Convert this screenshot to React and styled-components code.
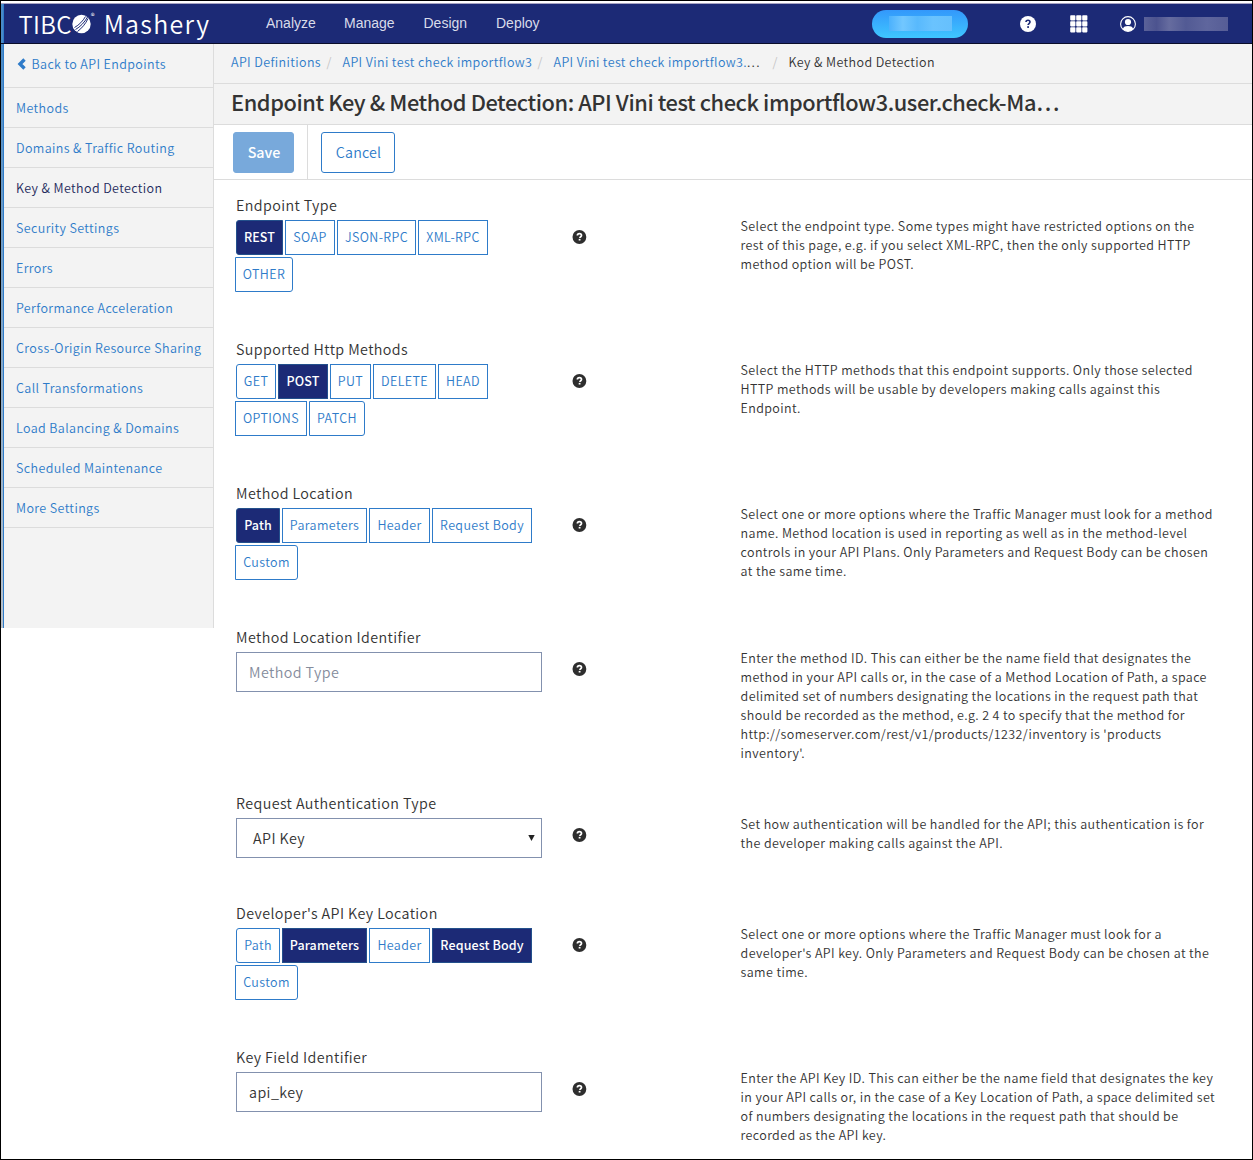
import React from "react";
import styled, { createGlobalStyle, css } from "styled-components";

const sans = '"Noto Sans CJK SC", "Noto Sans", sans-serif';
const navy = "#1c2a76";
const link = "#2e7bc9";
const rule = "#dcdcdc";

const Global = createGlobalStyle`
  * { box-sizing: border-box; }
  body { margin: 0; background: #fff; font-family: ${sans}; font-weight: 350; color: #333; }
  button, input { font-family: inherit; }
`;

const Frame = styled.div`
  width: 1253px;
  height: 1160px;
  overflow: hidden;
  border: 1px solid #000;
  background: #fff;
  display: flex;
  flex-direction: column;
`;

const TopBar = styled.header`
  flex: none;
  height: 41px;
  margin-top: 2px;
  border-top: 1px solid #a9a5c4;
  border-bottom: 1px solid #0a0d2a;
  background: ${navy};
  display: flex;
  align-items: center;
`;

const Edge = styled.div`
  flex: none;
  align-self: stretch;
  width: 3px;
  border-right: 1px solid ${link};
  background: linear-gradient(${(p) => p.$from}, ${(p) => p.$to});
`;

const Logo = styled.div`
  width: 248px;
  height: 39px;
  padding-left: 14.5px;
  display: flex;
  align-items: center;
  color: #fff;
  svg { display: block; }
`;

const LogoText = styled.span`
  font: 350 ${(p) => p.$size}px/37px ${sans};
  letter-spacing: ${(p) => p.$ls}px;
  margin-left: ${(p) => p.$ml ?? 0}px;
`;

const Reg = styled.span`
  width: 8px;
  font: 8px/10px ${sans};
  align-self: flex-start;
  margin-top: 7px;
`;

const NavLink = styled.a`
  width: ${(p) => p.$w}px;
  padding: 0 0 2px 14px;
  font: 14px/20px "Liberation Sans", Arial, sans-serif;
  color: #d9dcea;
`;

const Spacer = styled.div`
  flex: 1;
`;

const Pill = styled.div`
  width: 96px;
  height: 28px;
  border-radius: 14px;
  margin-right: 52px;
  background: linear-gradient(#3398fb, #3fc6ff);
  display: flex;
  align-items: center;
  justify-content: center;
`;

const Redacted = styled.div`
  width: ${(p) => p.$w}px;
  height: ${(p) => p.$h}px;
  margin-right: ${(p) => p.$gap ?? 0}px;
  background: ${(p) => p.$fill};
`;

const TopIcon = styled.div`
  display: flex;
  margin-right: ${(p) => p.$gap}px;
`;

const Body = styled.div`
  flex: 1;
  display: flex;
  align-items: flex-start;
`;

const Sidebar = styled.aside`
  flex: none;
  width: 213px;
  height: 584px;
  border-right: 1px solid ${rule};
  background: #f3f3f3;
  display: flex;
`;

const SideNav = styled.nav`
  flex: 1;
  min-width: 0;
`;

const Back = styled.a`
  height: 44px;
  padding: 0 0 4px 13px;
  border-bottom: 1px solid ${rule};
  display: flex;
  align-items: center;
  gap: 5.5px;
  font-size: 12.5px;
  letter-spacing: 0.38px;
  white-space: nowrap;
  color: ${link};
`;

const SideItem = styled.a`
  display: block;
  height: 40px;
  padding-left: 12px;
  border-bottom: 1px solid ${rule};
  font-size: 12.5px;
  line-height: 40px;
  letter-spacing: 0.385px;
  white-space: nowrap;
  color: ${(p) => (p.$active ? "#1d2a5c" : link)};
`;

const Main = styled.main`
  flex: 1;
  min-width: 0;
`;

const Crumbs = styled.div`
  height: 40px;
  padding: 0 0 4px 17px;
  border-bottom: 1px solid ${rule};
  background: #f3f3f3;
  display: flex;
  align-items: center;
  font-size: 12.5px;
  letter-spacing: 0.385px;
  white-space: nowrap;
`;

const Crumb = styled.span`
  width: ${(p) => p.$w}px;
  color: ${(p) => (p.$here ? "#333" : link)};
`;

const Slash = styled.span`
  width: ${(p) => p.$w}px;
  color: #c4c4c4;
`;

const Dots = styled.span`
  color: #333;
  letter-spacing: 1.2px;
`;

const Title = styled.h1`
  margin: 0;
  height: 41px;
  padding-left: 17px;
  border-bottom: 1px solid ${rule};
  background: #f3f3f3;
  font-size: 21.8px;
  font-weight: 500;
  line-height: 36px;
  letter-spacing: -0.425px;
  white-space: nowrap;
`;

const Toolbar = styled.div`
  height: 55px;
  padding-left: 19px;
  border-bottom: 1px solid ${rule};
  display: flex;
`;

const SaveCell = styled.div`
  width: 75px;
  padding-top: 7px;
  border-right: 1px solid ${rule};
`;

const CancelCell = styled.div`
  padding: 7px 0 0 13px;
`;

const Button = styled.button`
  width: ${(p) => p.$w}px;
  height: 41px;
  padding: 0 0 2px 1px;
  border-radius: 3px;
  border: 1px solid ${(p) => (p.$primary ? "#78a9db" : link)};
  background: ${(p) => (p.$primary ? "#78a9db" : "#fff")};
  color: ${(p) => (p.$primary ? "#fff" : link)};
  font-size: 14.3px;
  font-weight: ${(p) => (p.$primary ? 500 : 350)};
  letter-spacing: ${(p) => (p.$primary ? 0 : 0.15)}px;
`;

const Form = styled.div`
  padding: 16px 0 0 22px;
`;

const Field = styled.section`
  height: ${(p) => p.$h}px;
  display: grid;
  grid-template-columns: 336px 168.6px 1fr;
`;

const Label = styled.div`
  height: 24px;
  font-size: 14.3px;
  line-height: 18px;
  letter-spacing: 0.4px;
  white-space: nowrap;
`;

const Options = styled.div`
  display: flex;
  flex-direction: column;
  gap: 2px;
`;

const OptionRow = styled.div`
  display: flex;
  gap: 2px;
  margin-left: ${(p) => (p.$first ? 0 : -1)}px;
`;

const Option = styled.button`
  width: ${(p) => p.$w}px;
  height: 35px;
  padding: 0 0 2px 0;
  border: 1px solid ${link};
  border-radius: ${(p) => (p.$start ? "3px 0 0 3px" : p.$end ? "0 3px 3px 0" : "0")};
  background: #fff;
  color: ${link};
  font-size: 12.5px;
  font-weight: 350;
  letter-spacing: 0.38px;
  white-space: nowrap;
  ${(p) =>
    p.$on &&
    css`
      border-color: #23508c;
      background: ${navy};
      color: #fff;
      font-weight: 500;
      letter-spacing: 0.12px;
    `}
`;

const Input = styled.input`
  display: block;
  width: 306px;
  height: 40px;
  padding: 0 12px 2px;
  border: 1px solid #8391ae;
  border-radius: 0;
  background: #fff;
  color: #333;
  font-size: 14.3px;
  font-weight: 350;
  letter-spacing: 0.42px;
  &::placeholder { color: #858c9c; opacity: 1; }
`;

const SelectBox = styled.div`
  width: 306px;
  height: 40px;
  padding: 0 6px 0 16px;
  border: 1px solid #8391ae;
  display: flex;
  align-items: center;
  justify-content: space-between;
  font-size: 14.3px;
  line-height: 20px;
  letter-spacing: 0.42px;
`;

const Help = styled.div`
  padding: 34px 0 0 0.4px;
  svg { display: block; }
`;

const Description = styled.p`
  margin: 0;
  padding-top: 20px;
  font-size: 12.5px;
  line-height: 19px;
  letter-spacing: 0.38px;
  white-space: pre;
`;

const HelpIcon = () => (
  <svg width="15" height="14" viewBox="0 0 15 14">
    <circle cx="7.4" cy="7" r="6.9" fill="#2e2e2e" />
    <path d="M5.400 5.600C5.400 4.200 6.200 3.600 7.400 3.600s2.100.7 2.100 1.800c0 1.300-1.600 1.300-1.600 2.500" fill="none" stroke="#fff" strokeWidth="1.7" />
    <rect x="6.7" y="8.9" width="1.8" height="1.6" fill="#fff" />
  </svg>
);

const fields = [
  {
    label: "Endpoint Type",
    h: 144,
    rows: [
      [["REST", 47, true], ["SOAP", 50], ["JSON-RPC", 79], ["XML-RPC", 70]],
      [["OTHER", 58]],
    ],
    text: [
      "Select the endpoint type. Some types might have restricted options on the",
      "rest of this page, e.g. if you select XML-RPC, then the only supported HTTP",
      "method option will be POST.",
    ],
  },
  {
    label: "Supported Http Methods",
    h: 144,
    rows: [
      [["GET", 40], ["POST", 50, true], ["PUT", 41], ["DELETE", 63], ["HEAD", 50]],
      [["OPTIONS", 72], ["PATCH", 56]],
    ],
    text: [
      "Select the HTTP methods that this endpoint supports. Only those selected",
      "HTTP methods will be usable by developers making calls against this",
      "Endpoint.",
    ],
  },
  {
    label: "Method Location",
    h: 144,
    rows: [
      [["Path", 44, true], ["Parameters", 85], ["Header", 61], ["Request Body", 100]],
      [["Custom", 63]],
    ],
    text: [
      "Select one or more options where the Traffic Manager must look for a method",
      "name. Method location is used in reporting as well as in the method-level",
      "controls in your API Plans. Only Parameters and Request Body can be chosen",
      "at the same time.",
    ],
  },
  {
    label: "Method Location Identifier",
    h: 166,
    placeholder: "Method Type",
    text: [
      "Enter the method ID. This can either be the name field that designates the",
      "method in your API calls or, in the case of a Method Location of Path, a space",
      "delimited set of numbers designating the locations in the request path that",
      "should be recorded as the method, e.g. 2 4 to specify that the method for",
      "http://someserver.com/rest/v1/products/1232/inventory is 'products",
      "inventory'.",
    ],
  },
  {
    label: "Request Authentication Type",
    h: 110,
    select: "API Key",
    text: [
      "Set how authentication will be handled for the API; this authentication is for",
      "the developer making calls against the API.",
    ],
  },
  {
    label: "Developer's API Key Location",
    h: 144,
    rows: [
      [["Path", 44], ["Parameters", 85, true], ["Header", 61], ["Request Body", 100, true]],
      [["Custom", 63]],
    ],
    text: [
      "Select one or more options where the Traffic Manager must look for a",
      "developer's API key. Only Parameters and Request Body can be chosen at the",
      "same time.",
    ],
  },
  {
    label: "Key Field Identifier",
    h: 100,
    value: "api_key",
    text: [
      "Enter the API Key ID. This can either be the name field that designates the key",
      "in your API calls or, in the case of a Key Location of Path, a space delimited set",
      "of numbers designating the locations in the request path that should be",
      "recorded as the API key.",
    ],
  },
];

const sideItems = [
  "Methods",
  "Domains & Traffic Routing",
  "Key & Method Detection",
  "Security Settings",
  "Errors",
  "Performance Acceleration",
  "Cross-Origin Resource Sharing",
  "Call Transformations",
  "Load Balancing & Domains",
  "Scheduled Maintenance",
  "More Settings",
];

function Control({ field }) {
  if (field.rows) {
    return (
      <Options>
        {field.rows.map((row, r) => (
          <OptionRow key={r} $first={r === 0}>
            {row.map(([text, w, on], i) => (
              <Option
                key={text}
                $w={w}
                $on={on}
                $start={r === 0 && i === 0}
                $end={r === field.rows.length - 1 && i === row.length - 1}
              >
                {text}
              </Option>
            ))}
          </OptionRow>
        ))}
      </Options>
    );
  }
  if (field.select) {
    return (
      <SelectBox>
        <span>{field.select}</span>
        <svg width="7" height="6" viewBox="0 0 7 6"><path d="M.3 0h6.4L3.5 6z" fill="#222" /></svg>
      </SelectBox>
    );
  }
  return <Input placeholder={field.placeholder} defaultValue={field.value} />;
}

export default function App() {
  return (
    <>
      <Global />
      <Frame>
        <TopBar>
          <Edge $from="#4a8ac6" $to="#4a8ac6" />
          <Logo>
            <LogoText $size={24} $ls={0.3}>TIBC</LogoText>
            <svg width="19" height="20" viewBox="0 0 19 20">
              <circle cx="9.5" cy="10" r="9.2" fill="#fff" />
              <path d="M3.500 15.500C8 13 12.500 8.500 15.500 3M5.500 17.500C10 14 13.500 10 16 4.500M2.500 13.500C7 11 11 7 13.500 2.500" fill="none" stroke={navy} strokeWidth="1" />
            </svg>
            <Reg>®</Reg>
            <LogoText $size={25} $ls={1.3} $ml={5}>Mashery</LogoText>
          </Logo>
          <NavLink $w={78}>Analyze</NavLink>
          <NavLink $w={79.5}>Manage</NavLink>
          <NavLink $w={72.5}>Design</NavLink>
          <NavLink $w={73}>Deploy</NavLink>
          <Spacer />
          <Pill>
            <Redacted $w={63} $h={15} $fill="linear-gradient(90deg,#4bb1fd,#72c7ff 22%,#58b9fd 45%,#6ac3fe 70%,#66c0fd)" />
          </Pill>
          <TopIcon $gap={34}>
            <svg width="16" height="16" viewBox="0 0 16 16">
              <circle cx="8" cy="8" r="8" fill="#fff" />
              <path d="M6 6.1C6 4.9 6.8 4.3 8 4.3s2 .7 2 1.8c0 1.4-1.9 1.5-1.9 3" fill="none" stroke={navy} strokeWidth="1.6" />
              <rect x="7.2" y="10.2" width="1.8" height="1.7" fill={navy} />
            </svg>
          </TopIcon>
          <TopIcon $gap={32}>
            <svg width="18" height="18" viewBox="0 0 18 18" fill="#fff">
              {[0, 6, 12].map((y) => [0, 6, 12].map((x) => <rect key={x + "-" + y} x={x + 0.2} y={y + 0.2} width="5.2" height="5.2" rx=".8" />))}
            </svg>
          </TopIcon>
          <TopIcon $gap={8}>
            <svg width="16" height="16" viewBox="0 0 16 16">
              <circle cx="8" cy="8" r="7.4" fill="none" stroke="#fff" strokeWidth="1.1" />
              <circle cx="8" cy="6" r="3.1" fill="#fff" />
              <path d="M2.800 13C3.500 10.600 5.500 10 8 10s4.500.6 5.200 3C11.800 14.500 10 15.200 8 15.200S4.200 14.500 2.800 13z" fill="#fff" />
            </svg>
          </TopIcon>
          <Redacted $w={84} $h={14} $gap={24} $fill="linear-gradient(90deg,#5b6299,#4c538f 15%,#666c9f 30%,#525a94 50%,#5f669d 75%,#565d96)" />
        </TopBar>
        <Body>
          <Sidebar>
            <Edge $from="#4a8ac6" $to="#b9c1c9" />
            <SideNav>
              <Back>
                <svg width="9" height="12" viewBox="0 0 9 12"><path d="M7.500 1.500 3 6l4.500 4.500" fill="none" stroke={link} strokeWidth="3.400" /></svg>
                Back to API Endpoints
              </Back>
              {sideItems.map((t) => (
                <SideItem key={t} $active={t === "Key & Method Detection"}>{t}</SideItem>
              ))}
            </SideNav>
          </Sidebar>
          <Main>
            <Crumbs>
              <Crumb $w={95.5}>API Definitions</Crumb>
              <Slash $w={16}>/</Slash>
              <Crumb $w={195}>API Vini test check importflow3</Crumb>
              <Slash $w={16}>/</Slash>
              <Crumb $w={219}>API Vini test check importflow3.<Dots>...</Dots></Crumb>
              <Slash $w={16}>/</Slash>
              <Crumb $here>Key & Method Detection</Crumb>
            </Crumbs>
            <Title>Endpoint Key & Method Detection: API Vini test check importflow3.user.check-Ma…</Title>
            <Toolbar>
              <SaveCell><Button $w={61} $primary>Save</Button></SaveCell>
              <CancelCell><Button $w={74}>Cancel</Button></CancelCell>
            </Toolbar>
            <Form>
              {fields.map((f) => (
                <Field key={f.label} $h={f.h}>
                  <div>
                    <Label>{f.label}</Label>
                    <Control field={f} />
                  </div>
                  <Help><HelpIcon /></Help>
                  <Description>{f.text.join("\n")}</Description>
                </Field>
              ))}
            </Form>
          </Main>
        </Body>
      </Frame>
    </>
  );
}
